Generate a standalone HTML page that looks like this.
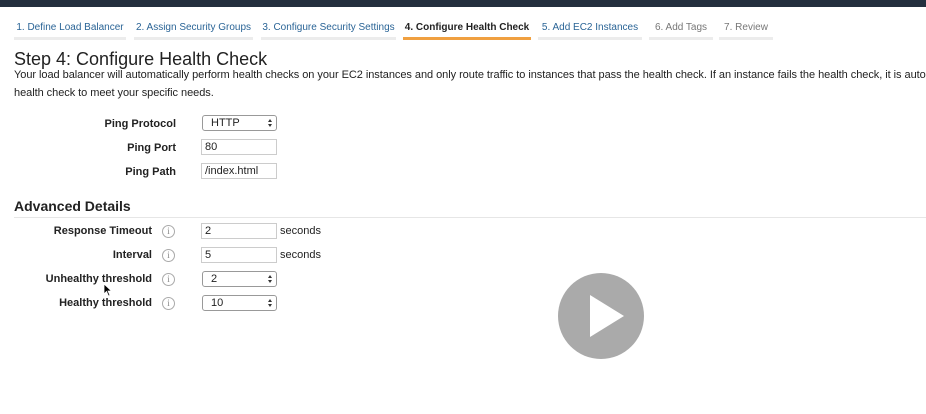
<!DOCTYPE html>
<html><head><meta charset="utf-8"><style>
*{margin:0;padding:0;box-sizing:border-box}
body{width:926px;height:414px;overflow:hidden;background:#fff;font-family:"Liberation Sans",Arial,sans-serif;position:relative;color:#222}
.top{position:absolute;left:0;top:0;width:926px;height:7px;background:#232f3e}
.tab{position:absolute;top:21px;font-size:10px;color:#2a6496;text-align:center;height:19px;border-bottom:3px solid #ececec;white-space:nowrap;padding-top:1px}
.tab.a{color:#222;font-weight:bold;border-bottom-color:#f0a040}
.tab.g{color:#777}
h1{position:absolute;left:14px;top:50px;font-size:18px;line-height:18px;font-weight:normal;color:#222}
.desc{position:absolute;left:14px;top:66px;width:912px;overflow:hidden;font-size:11px;line-height:18px;color:#222;white-space:nowrap;letter-spacing:-0.05px}
h2{position:absolute;left:14px;top:198px;font-size:14px;font-weight:bold}
.hr{position:absolute;left:14px;top:217px;width:912px;height:1px;background:#e6e6e6}
.lbl{position:absolute;right:calc(926px - 176px);font-size:11px;font-weight:bold;white-space:nowrap}
.lbl2{right:calc(926px - 152px)}
.inp{position:absolute;left:201px;width:76px;height:16px;border:1px solid #ccc;font-size:11px;padding:1px 3px}
.sel{position:absolute;left:202px;width:75px;height:16px;border:1px solid #999;border-radius:3px;font-size:11px;padding:1px 8px}
.sel:after{content:"";position:absolute;right:4px;top:3px;border-left:2px solid transparent;border-right:2px solid transparent;border-bottom:3px solid #333}
.sel:before{content:"";position:absolute;right:4px;top:8px;border-left:2px solid transparent;border-right:2px solid transparent;border-top:3px solid #333}
.sec{position:absolute;left:280px;font-size:11px}
.i{position:absolute;left:162px;width:13px;height:13px;border:1px solid #aaa;border-radius:50%;font-size:9px;color:#888;text-align:center;line-height:11px;font-family:"Liberation Serif",serif}
.play{position:absolute;left:558px;top:273px;width:86px;height:86px;border-radius:50%;background:#aaa}
</style></head><body>
<div class="top"></div>
<div class="tab" style="left:14px;width:112px">1. Define Load Balancer</div>
<div class="tab" style="left:134px;width:119px">2. Assign Security Groups</div>
<div class="tab" style="left:261px;width:135px">3. Configure Security Settings</div>
<div class="tab a" style="left:403px;width:128px">4. Configure Health Check</div>
<div class="tab" style="left:538px;width:104px">5. Add EC2 Instances</div>
<div class="tab g" style="left:649px;width:64px">6. Add Tags</div>
<div class="tab g" style="left:719px;width:54px">7. Review</div>
<h1>Step 4: Configure Health Check</h1>
<div class="desc">Your load balancer will automatically perform health checks on your EC2 instances and only route traffic to instances that pass the health check. If an instance fails the health check, it is automatically<br>health check to meet your specific needs.</div>

<div class="lbl" style="top:118px">Ping Protocol</div>
<div class="sel" style="top:115px">HTTP</div>
<div class="lbl" style="top:142px">Ping Port</div>
<div class="inp" style="top:139px">80</div>
<div class="lbl" style="top:166px">Ping Path</div>
<div class="inp" style="top:163px">/index.html</div>

<h2>Advanced Details</h2>
<div class="hr"></div>
<div class="lbl lbl2" style="top:225px">Response Timeout</div><div class="i" style="top:225px">i</div>
<div class="inp" style="top:223px">2</div><div class="sec" style="top:225px">seconds</div>
<div class="lbl lbl2" style="top:249px">Interval</div><div class="i" style="top:249px">i</div>
<div class="inp" style="top:247px">5</div><div class="sec" style="top:249px">seconds</div>
<div class="lbl lbl2" style="top:273px">Unhealthy threshold</div><div class="i" style="top:273px">i</div>
<div class="sel" style="top:271px">2</div>
<div class="lbl lbl2" style="top:297px">Healthy threshold</div><div class="i" style="top:297px">i</div>
<div class="sel" style="top:295px">10</div>

<svg style="position:absolute;left:103px;top:283px" width="10" height="14" viewBox="0 0 10 14"><path d="M1 1 L1 11 L3.5 8.5 L5.5 13 L7 12.3 L5 8 L8.5 8 Z" fill="#000" stroke="#fff" stroke-width="0.8"/></svg>

<div class="play"><svg width="86" height="86" viewBox="0 0 86 86"><path d="M32 22 L66 43 L32 64 Z" fill="#fff"/></svg></div>
</body></html>
